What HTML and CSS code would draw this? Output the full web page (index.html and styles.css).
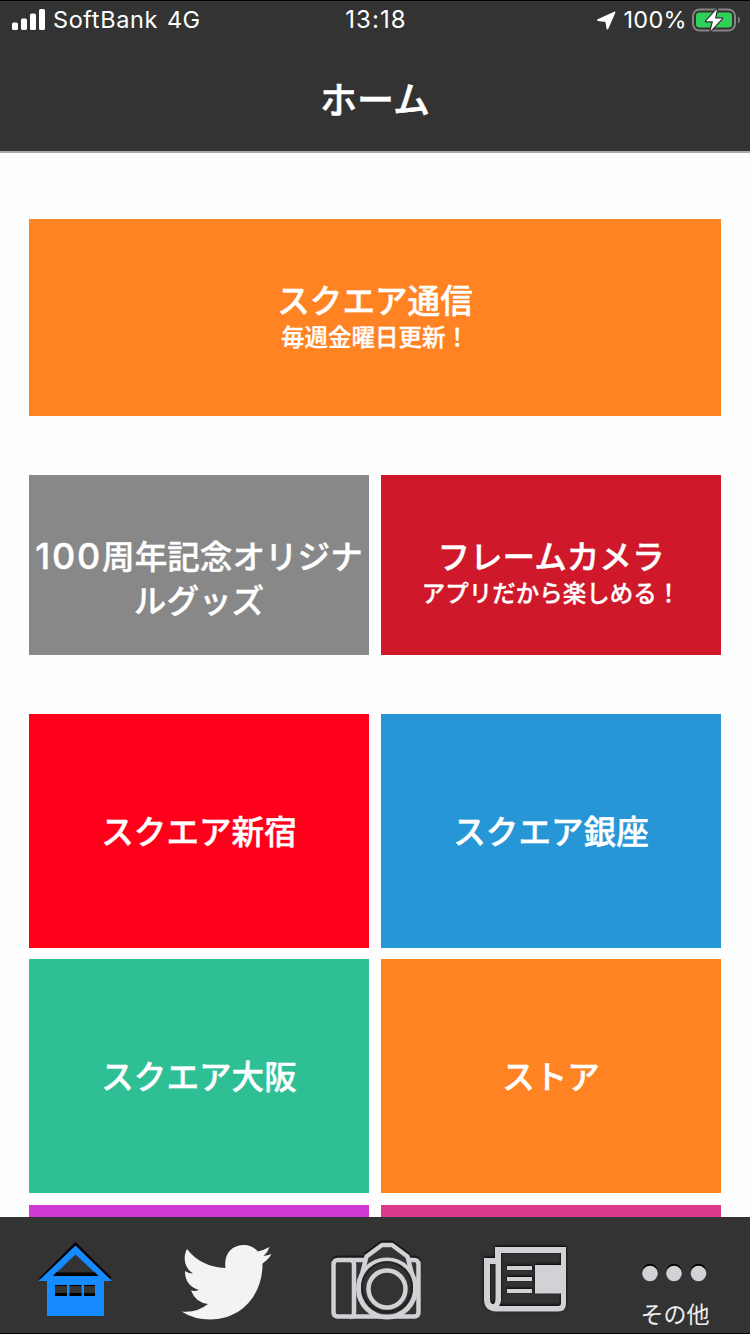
FILE: index.html
```html
<!DOCTYPE html>
<html lang="ja">
<head>
<meta charset="utf-8">
<title>ホーム</title>
<link rel="stylesheet" href="styles.css">
</head>
<body>
<div class="screen">
  <header class="header">
    <div class="status">
      <div class="status-side">
        <svg class="signal" width="34" height="22" viewBox="0 0 34 22"><g fill="#fff"><rect x="0" y="13.500" width="6" height="7.500" rx="1.6"/><rect x="9" y="9.500" width="6" height="11.500" rx="1.6"/><rect x="18" y="4.500" width="6" height="16.500" rx="1.6"/><rect x="27" y="0" width="6" height="21" rx="1.6"/></g></svg>
        <span class="carrier">SoftBank</span><span class="network">4G</span>
      </div>
      <div class="clock">13:18</div>
      <div class="status-side status-right">
        <svg width="19" height="19" viewBox="0 0 19 19"><path d="M17.500 1.500 10.500 17.500 9.200 10.200 1 9Z" fill="#fff" stroke="#fff" stroke-width="1.800" stroke-linejoin="round"/></svg>
        <span class="percent">100%</span>
        <svg class="battery" width="48" height="24" viewBox="0 0 48 24"><rect x="1" y="1.500" width="42" height="21" rx="6.500" fill="none" stroke="#858585" stroke-width="2"/><rect x="4" y="4.500" width="36" height="15" rx="3.500" fill="#30d158"/><path d="M46 8.500c2.500 1.500 2.500 5.500 0 7Z" fill="#858585"/><path d="M25 1 14 13.300h7L18.500 23 30 10.500h-7Z" fill="#fff" stroke="#333" stroke-width="2.500" paint-order="stroke" stroke-linejoin="round"/></svg>
      </div>
    </div>
    <h1 class="title">ホーム</h1>
  </header>
  <main class="content">
    <section class="grid single"><a class="tile orange"><span class="name">スクエア通信</span><span class="note">毎週金曜日更新！</span></a></section>
    <section class="grid pair">
      <a class="tile gray"><span class="name"><span class="digits">100</span>周年記念オリジナルグッズ</span></a>
      <a class="tile crimson"><span class="name">フレームカメラ</span><span class="note">アプリだから楽しめる！</span></a>
    </section>
    <section class="grid shops">
      <a class="tile red"><span class="name">スクエア新宿</span></a>
      <a class="tile blue"><span class="name">スクエア銀座</span></a>
      <a class="tile green"><span class="name">スクエア大阪</span></a>
      <a class="tile orange"><span class="name">ストア</span></a>
      <a class="tile purple"></a>
      <a class="tile pink"></a>
    </section>
  </main>
  <nav class="tabs">
    <a class="tab"><svg width="150" height="116" viewBox="0 1217 150 116">
      <path d="M38.500 1279 75.500 1242 112 1278Z" fill="#000"/>
      <path d="M38.500 1281 75.500 1245.500 112 1281H104V1316H47V1281Z" fill="#168bff"/>
      <path d="M75.500 1254.500 98.500 1276H53Z" fill="#333"/><path d="M56 1272.500H95L98.500 1276H53Z" fill="#000"/>
      <path d="M55 1285h12v11h-12zM69.500 1285h12v11h-12zM84 1285h11v11h-11z" fill="#333"/><path d="M55 1293h12v3h-12zM69.500 1293h12v3h-12zM84 1293h11v3h-11zM55 1285h12v1h-12zM69.500 1285h12v1h-12zM84 1285h11v1h-11z" fill="#000"/>
    </svg></a>
    <a class="tab"><svg width="150" height="116" viewBox="150 1217 150 116">
      <path d="M187 1249C196 1261 210 1267.500 225.500 1268C223.500 1255 231 1245 244 1245C250 1245 255 1248 258 1251.500Q264 1250 269.500 1247Q268 1252 263.500 1256Q267.500 1255.500 271.500 1254Q268.500 1259.500 262.500 1263.500C263 1294 242 1319.500 210 1319.500Q194 1319.500 181.500 1311.500Q197 1313 208 1304Q195.500 1302.500 191 1290.500Q195 1291.500 199 1290Q185 1286 185 1271Q189 1273.500 193 1273.500C184.500 1268 182.500 1258 187 1249Z" fill="#f3f3f3"/>
    </svg></a>
    <a class="tab"><svg width="150" height="116" viewBox="300 1217 150 116">
      <defs><g id="camera"><rect x="333.500" y="1260" width="85" height="56.500" rx="4"/><path d="M350 1260q4 0 4 4v49q0 4-4 4"/><path d="M361 1278 366.500 1256.500 382 1245H392L407.500 1256.500 413 1278" stroke-linejoin="round"/></g></defs>
      <use href="#camera" y="-2" fill="none" stroke="#181818" stroke-width="5"/>
      <use href="#camera" fill="#333" stroke="#d1d1d6" stroke-width="4.500"/>
      <circle cx="387" cy="1288.500" r="28.500" fill="#333" stroke="#d1d1d6" stroke-width="5"/>
      <circle cx="387" cy="1287" r="25" fill="none" stroke="#222" stroke-width="2"/>
      <circle cx="387" cy="1289" r="18.500" fill="#333" stroke="#d1d1d6" stroke-width="4.500"/>
    </svg></a>
    <a class="tab"><svg class="news" width="150" height="116" viewBox="450 1217 150 116">
      <g class="raised"><path d="M495 1247H566V1265H561V1253H501V1300Q501 1303.500 499 1306H558Q561 1306 561 1303V1293H566V1304Q566 1311.500 558 1311.500H496Q484 1311 484 1299V1258H495ZM490 1264V1298Q490 1304 493 1304Q495.500 1304 495.500 1298V1264Z" fill="#d1d1d6" fill-rule="evenodd"/><path d="M535 1265h31v28.500h-31z" fill="#d1d1d6"/><path d="M507 1268h25M507 1279h25M507 1291h25" stroke="#d1d1d6" stroke-width="4"/></g>
    </svg></a>
    <a class="tab more"><svg width="150" height="80" viewBox="600 1217 150 80"><g fill="#000"><circle cx="650" cy="1271.500" r="7.700"/><circle cx="674" cy="1271.500" r="7.700"/><circle cx="698.500" cy="1271.500" r="7.700"/></g><g fill="#d1d1d6"><circle cx="650" cy="1273.500" r="7.800"/><circle cx="674" cy="1273.500" r="7.800"/><circle cx="698.500" cy="1273.500" r="7.800"/></g></svg><span class="tab-label">その他</span></a>
  </nav>
</div>
</body>
</html>
```
FILE: styles.css
```css
* { box-sizing: border-box; }
body { margin: 0; background: #fefefe; font-family: "Noto Sans CJK JP", sans-serif; color: #fff; }
svg { display: block; flex: none; }
.screen { width: 750px; height: 1334px; overflow: hidden; display: flex; flex-direction: column; }
.header { flex: none; height: 153px; background: #333; border-top: 1px solid #000; border-bottom: 2px solid #aaa; }
.status { height: 38px; display: grid; grid-template-columns: 1fr auto 1fr; align-items: center; padding: 0 10px 0 12px; font: 400 23.500px/38px Inter, sans-serif; }
.status-side { display: flex; align-items: center; }
.status-right { justify-content: flex-end; }
.carrier { margin-left: 7px; letter-spacing: .600px; }
.network { margin-left: 9px; letter-spacing: .300px; }
.clock { font-size: 24px; letter-spacing: 1.100px; }
.percent { margin: 0 5px 0 8px; letter-spacing: .300px; }
.title { margin: 31px 0 0; text-align: center; font-size: 37px; font-weight: 500; line-height: 56px; -webkit-text-stroke: .500px #fff; }
.content { flex: 1; min-height: 0; overflow: hidden; padding: 66px 29px 0; display: flex; flex-direction: column; gap: 59px; }
.grid { flex: none; display: grid; column-gap: 12px; }
.single { height: 197px; }
.pair { height: 180px; grid-template-columns: 1fr 1fr; }
.shops { grid-template-columns: 1fr 1fr; grid-auto-rows: 234px; row-gap: 11.300px; }
.tile { display: flex; flex-direction: column; align-items: center; padding-top: 58px; text-align: center; }
.shops .tile { justify-content: center; padding: 0 0 2px; }
.name { font-size: 32.600px; font-weight: 500; line-height: 44px; -webkit-text-stroke: .400px #fff; }
.digits { font-size: 36px; font-family: Inter, sans-serif; line-height: 1; letter-spacing: 1.800px; }
.note { font-size: 23.500px; font-weight: 500; line-height: 30px; -webkit-text-stroke: .300px #fff; }
.orange { background: #ff8322; }
.gray { background: #888; }
.crimson { background: #cf182a; }
.red { background: #ff001b; }
.blue { background: #2796d7; }
.green { background: #2ec094; }
.purple { background: #cf39d4; }
.pink { background: #dd398b; }
.tabs { flex: none; height: 117px; background: #333; border-bottom: 1px solid #000; display: grid; grid-template-columns: repeat(5, 150px); }
.tab { display: flex; flex-direction: column; }
.raised { filter: drop-shadow(0 -1px 1.500px #000); }
.tab-label { text-align: center; font-size: 23px; line-height: 33px; color: #eee; }
```
